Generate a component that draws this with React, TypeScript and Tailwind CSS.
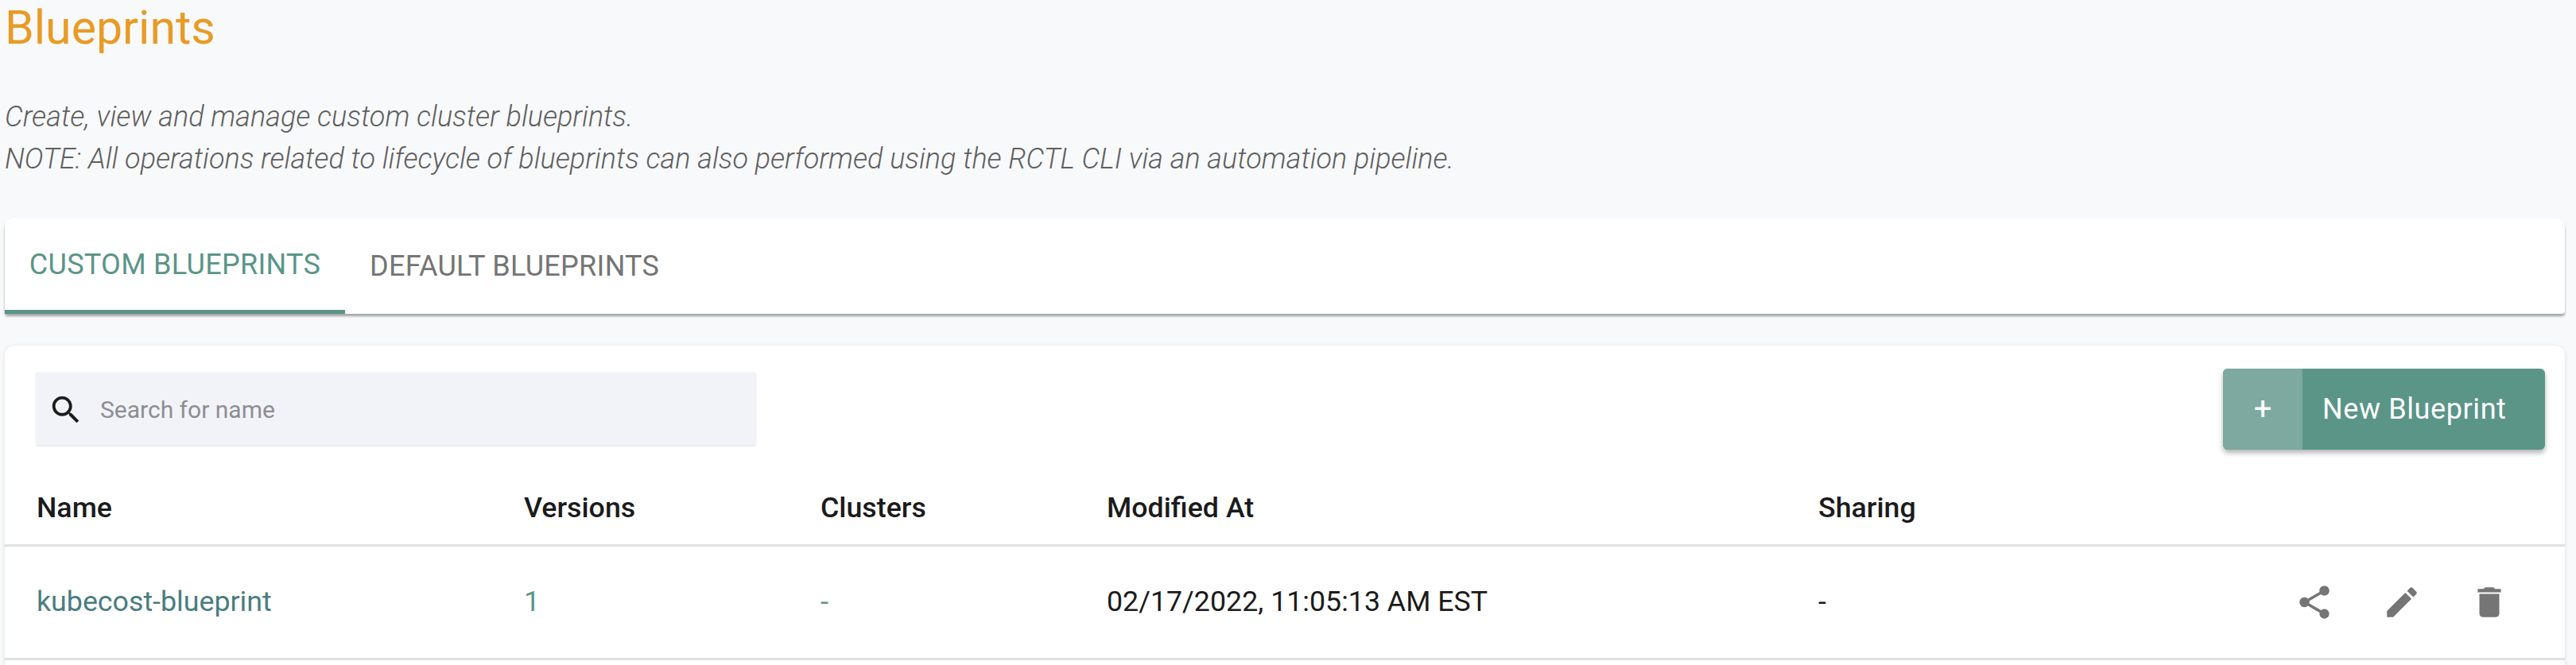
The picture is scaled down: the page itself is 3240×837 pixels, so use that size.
const roboto = "font-['Roboto',sans-serif]";

function Icon({ d, className }: { d: string; className: string }) {
  return (
    <svg viewBox="0 0 24 24" fill="currentColor" className={className}>
      <path d={d} />
    </svg>
  );
}

const icons = {
  search:
    "M15.5 14h-.79l-.28-.27C15.41 12.59 16 11.11 16 9.5 16 5.91 13.09 3 9.5 3S3 5.91 3 9.5 5.91 16 9.5 16c1.61 0 3.09-.59 4.23-1.57l.27.28v.79l5 4.99L20.49 19l-4.99-5zm-6 0C7.01 14 5 11.99 5 9.5S7.01 5 9.5 5 14 7.01 14 9.5 11.99 14 9.5 14z",
  share:
    "M18 16.08c-.76 0-1.44.3-1.96.77L8.91 12.7c.05-.23.09-.46.09-.7s-.04-.47-.09-.7l7.05-4.11c.54.5 1.25.81 2.04.81 1.66 0 3-1.34 3-3s-1.34-3-3-3-3 1.34-3 3c0 .24.04.47.09.7L8.04 9.81C7.5 9.31 6.79 9 6 9c-1.66 0-3 1.34-3 3s1.34 3 3 3c.79 0 1.5-.31 2.04-.81l7.12 4.16c-.05.21-.08.43-.08.65 0 1.61 1.31 2.92 2.92 2.92 1.61 0 2.92-1.31 2.92-2.92s-1.31-2.92-2.92-2.92z",
  edit: "M3 17.25V21h3.75L17.81 9.94l-3.75-3.75L3 17.25zM20.71 7.04c.39-.39.39-1.02 0-1.41l-2.34-2.34c-.39-.39-1.02-.39-1.41 0l-1.83 1.83 3.75 3.75 1.83-1.83z",
  trash: "M6 19c0 1.1.9 2 2 2h8c1.1 0 2-.9 2-2V7H6v12zM19 4h-3.5l-1-1h-5l-1 1H5v2h14V4z",
};

const columns = "grid grid-cols-[613px_373px_360px_895px_1fr] pl-[40px] pr-[41px] items-center";

export default function App() {
  return (
    <div className={`${roboto} h-[837px] w-[3240px] overflow-hidden bg-[#f8f9fb] pl-[6px] pr-[14px]`}>
      {/* Page heading */}
      <h1 className="text-[59px] leading-[70px] font-normal text-[#e89b25]">Blueprints</h1>
      <div className="mt-[51px] text-[36px] leading-[53px] font-light text-[#5f5f5f] italic">
        <p>Create, view and manage custom cluster blueprints.</p>
        <p>NOTE: All operations related to lifecycle of blueprints can also performed using the RCTL CLI via an automation pipeline.</p>
      </div>

      {/* Tabs */}
      <div className="mt-[48px] flex h-[120px] rounded-t-[12px] rounded-b-[4px] bg-white shadow-[0_3px_3px_rgba(0,0,0,0.35)]">
        <div className="flex h-full w-[428px] items-center justify-center border-b-[5px] border-[#5a9588] text-[36px] font-normal tracking-[0.3px] text-[#5a9588]">
          CUSTOM BLUEPRINTS
        </div>
        <div className="flex h-full items-center pl-[31px] text-[36px] font-normal tracking-[0.3px] text-[#757575]">DEFAULT BLUEPRINTS</div>
      </div>

      {/* Blueprint list */}
      <div className="mt-[40px] h-[500px] rounded-t-[12px] bg-white shadow-[0_1px_5px_rgba(0,0,0,0.12)]">
        <div className="flex items-start justify-between pt-[29px] pr-[25px] pl-[40px]">
          <div className="mt-[5px] flex h-[91px] w-[904px] items-center bg-[#f2f3f8] pt-[2px] pl-[14px] shadow-[0_1px_3px_rgba(0,0,0,0.15)]">
            <Icon d={icons.search} className="h-[46px] w-[46px] text-[#1c1c1c]" />
            <span className="ml-[20px] text-[30px] text-[#8d8d92]">Search for name</span>
          </div>
          <div className="flex h-[102px] w-[405px] overflow-hidden rounded-[6px] bg-[#5a9588] text-white shadow-[0_4px_6px_rgba(0,0,0,0.3)]">
            <div className="flex w-[100px] items-center justify-center bg-[#7ea9a0] text-[40px]">+</div>
            <div className="flex flex-1 items-center pl-[25px] text-[36px] tracking-[0.6px]">New Blueprint</div>
          </div>
        </div>

        <div className={`${columns} mt-[29px] h-[93px] border-b-[3px] border-[#e0e0e0] text-[35.75px] font-medium text-[#1b1b1b]`}>
          <div>Name</div>
          <div>Versions</div>
          <div>Clusters</div>
          <div>Modified At</div>
          <div>Sharing</div>
        </div>

        <div className={`${columns} h-[143px] border-b-[3px] border-[#e0e0e0] text-[35.75px]`}>
          <div className="text-[#4b7d7f]">kubecost-blueprint</div>
          <div className="text-[#5a9588]">1</div>
          <div className="text-[#5a9588]">-</div>
          <div className="text-[#1b1b1b]">02/17/2022, 11:05:13 AM EST</div>
          <div className="flex items-center justify-between text-[#1b1b1b]">
            <span>-</span>
            <div className="flex gap-[60px] pr-[29px] text-[#757575]">
              <Icon d={icons.share} className="h-[50px] w-[50px]" />
              <Icon d={icons.edit} className="h-[50px] w-[50px]" />
              <Icon d={icons.trash} className="h-[50px] w-[50px]" />
            </div>
          </div>
        </div>
      </div>
    </div>
  );
}
